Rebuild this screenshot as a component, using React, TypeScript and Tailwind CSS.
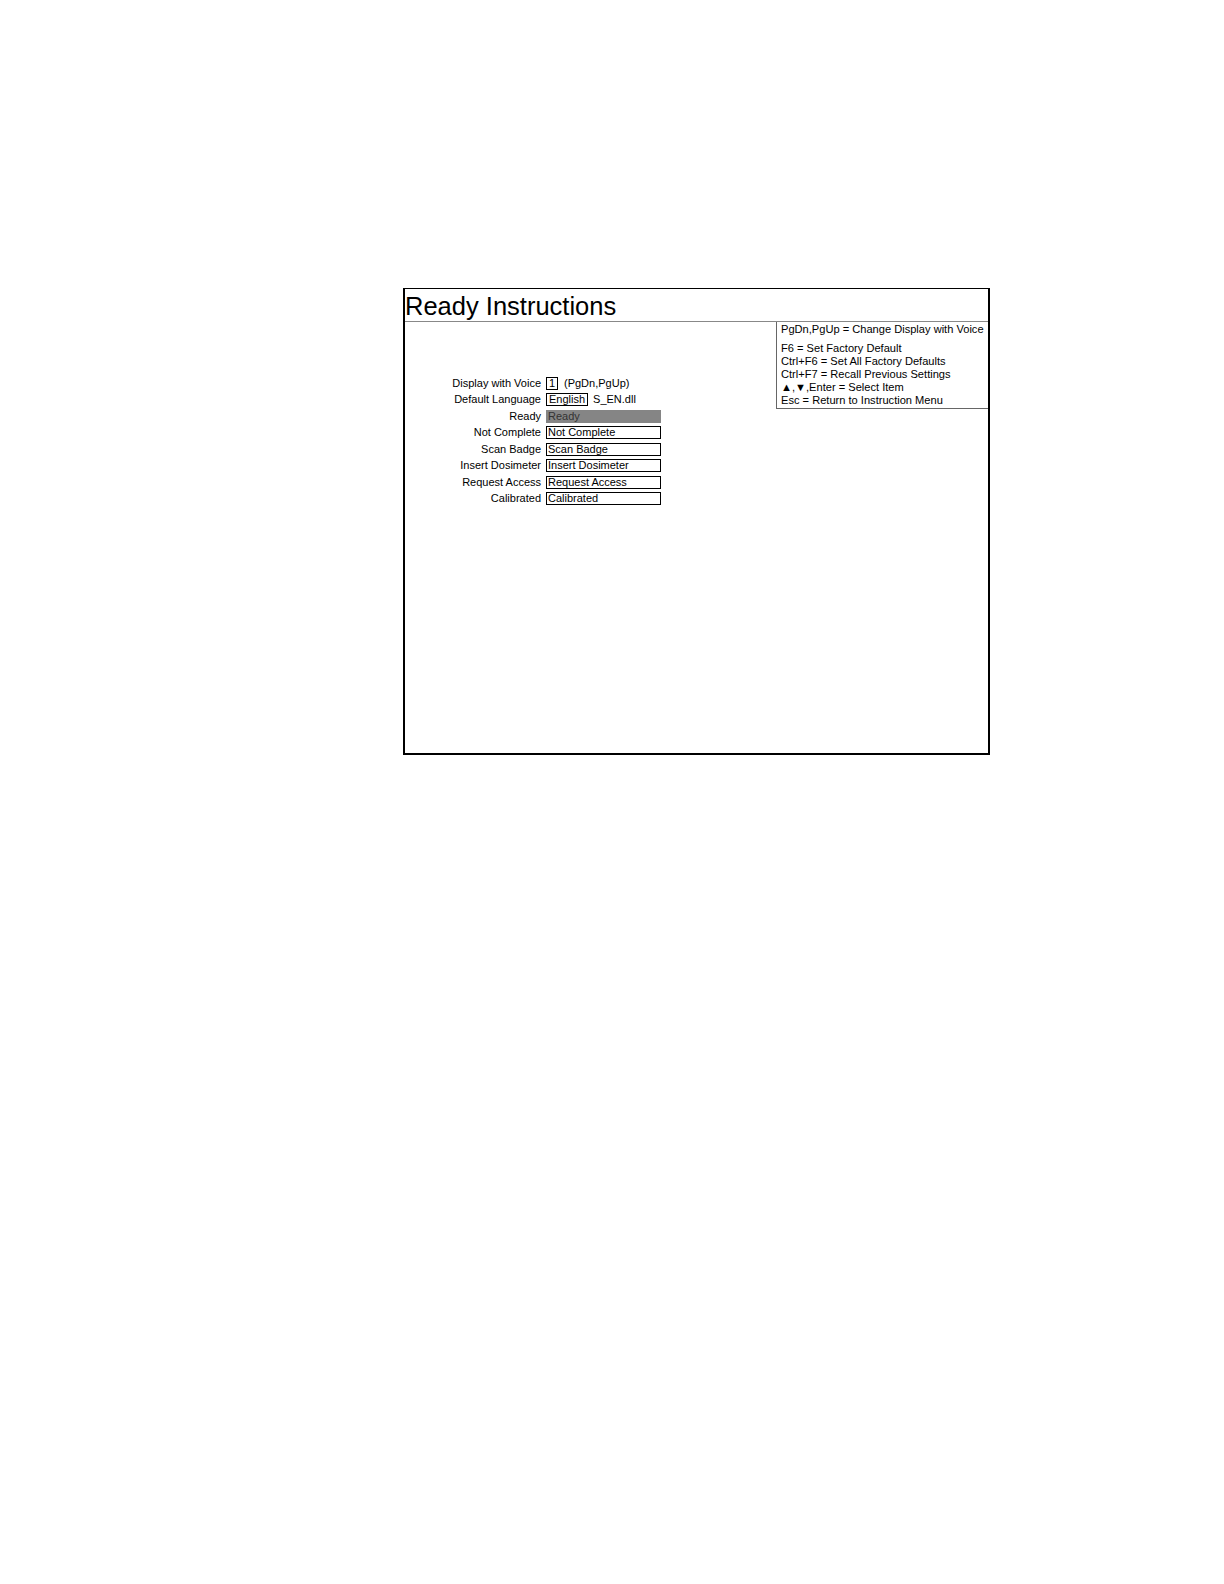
const FIELDS = [
  { label: "Ready", value: "Ready", active: true },
  { label: "Not Complete", value: "Not Complete" },
  { label: "Scan Badge", value: "Scan Badge" },
  { label: "Insert Dosimeter", value: "Insert Dosimeter" },
  { label: "Request Access", value: "Request Access" },
  { label: "Calibrated", value: "Calibrated" },
];

const KEYS = [
  "F6 = Set Factory Default",
  "Ctrl+F6 = Set All Factory Defaults",
  "Ctrl+F7 = Recall Previous Settings",
  "\u25B2,\u25BC,Enter = Select Item",
  "Esc = Return to Instruction Menu",
];

function Row({ label, children }: { label: string; children: React.ReactNode }) {
  return (
    <div className="flex items-center h-[16.5px]">
      <div className="w-[141px] pr-[5px] text-right whitespace-nowrap">{label}</div>
      {children}
    </div>
  );
}

export default function App() {
  return (
    <div
      className="bg-white pt-[288px] pl-[403px] text-black text-[11px] leading-[13px]"
      style={{ fontFamily: '"Liberation Sans", Arial, sans-serif' }}
    >
      <div className="w-[587px] h-[467px] border-t border-r-2 border-b-2 border-l-2 border-black flex flex-col">
        {/* Title bar */}
        <div className="h-[33px] border-b border-[#888] flex items-center">
          <h1 className="text-[25.5px] leading-[30px] font-normal pt-[1px]">Ready Instructions</h1>
        </div>

        <div className="flex flex-1">
          {/* Form */}
          <div className="w-[371px] pt-[53px]">
            <Row label="Display with Voice">
              <span className="border border-black h-[13px] w-[12px] flex items-center justify-center">1</span>
              <span className="ml-[6px]">(PgDn,PgUp)</span>
            </Row>
            <Row label="Default Language">
              <span className="border border-black h-[13px] px-[2px] flex items-center">English</span>
              <span className="ml-[5px]">S_EN.dll</span>
            </Row>
            {FIELDS.map((f) => (
              <Row key={f.label} label={f.label}>
                {f.active ? (
                  <span className="h-[13px] w-[115px] bg-[#858585] text-[#333] px-[2px] flex items-center">
                    {f.value}
                  </span>
                ) : (
                  <span className="border border-black h-[13px] w-[115px] px-[1px] flex items-center">
                    {f.value}
                  </span>
                )}
              </Row>
            ))}
          </div>

          {/* Key help panel */}
          <div className="flex-1">
            <div className="border-l border-b border-[#666] h-[87px] pl-[4px] pt-[1px] text-[11.1px]">
              <div className="whitespace-nowrap">PgDn,PgUp = Change Display with Voice</div>
              <div className="mt-[6px]">
                {KEYS.map((k) => (
                  <div key={k} className="whitespace-nowrap">{k}</div>
                ))}
              </div>
            </div>
          </div>
        </div>
      </div>
    </div>
  );
}
